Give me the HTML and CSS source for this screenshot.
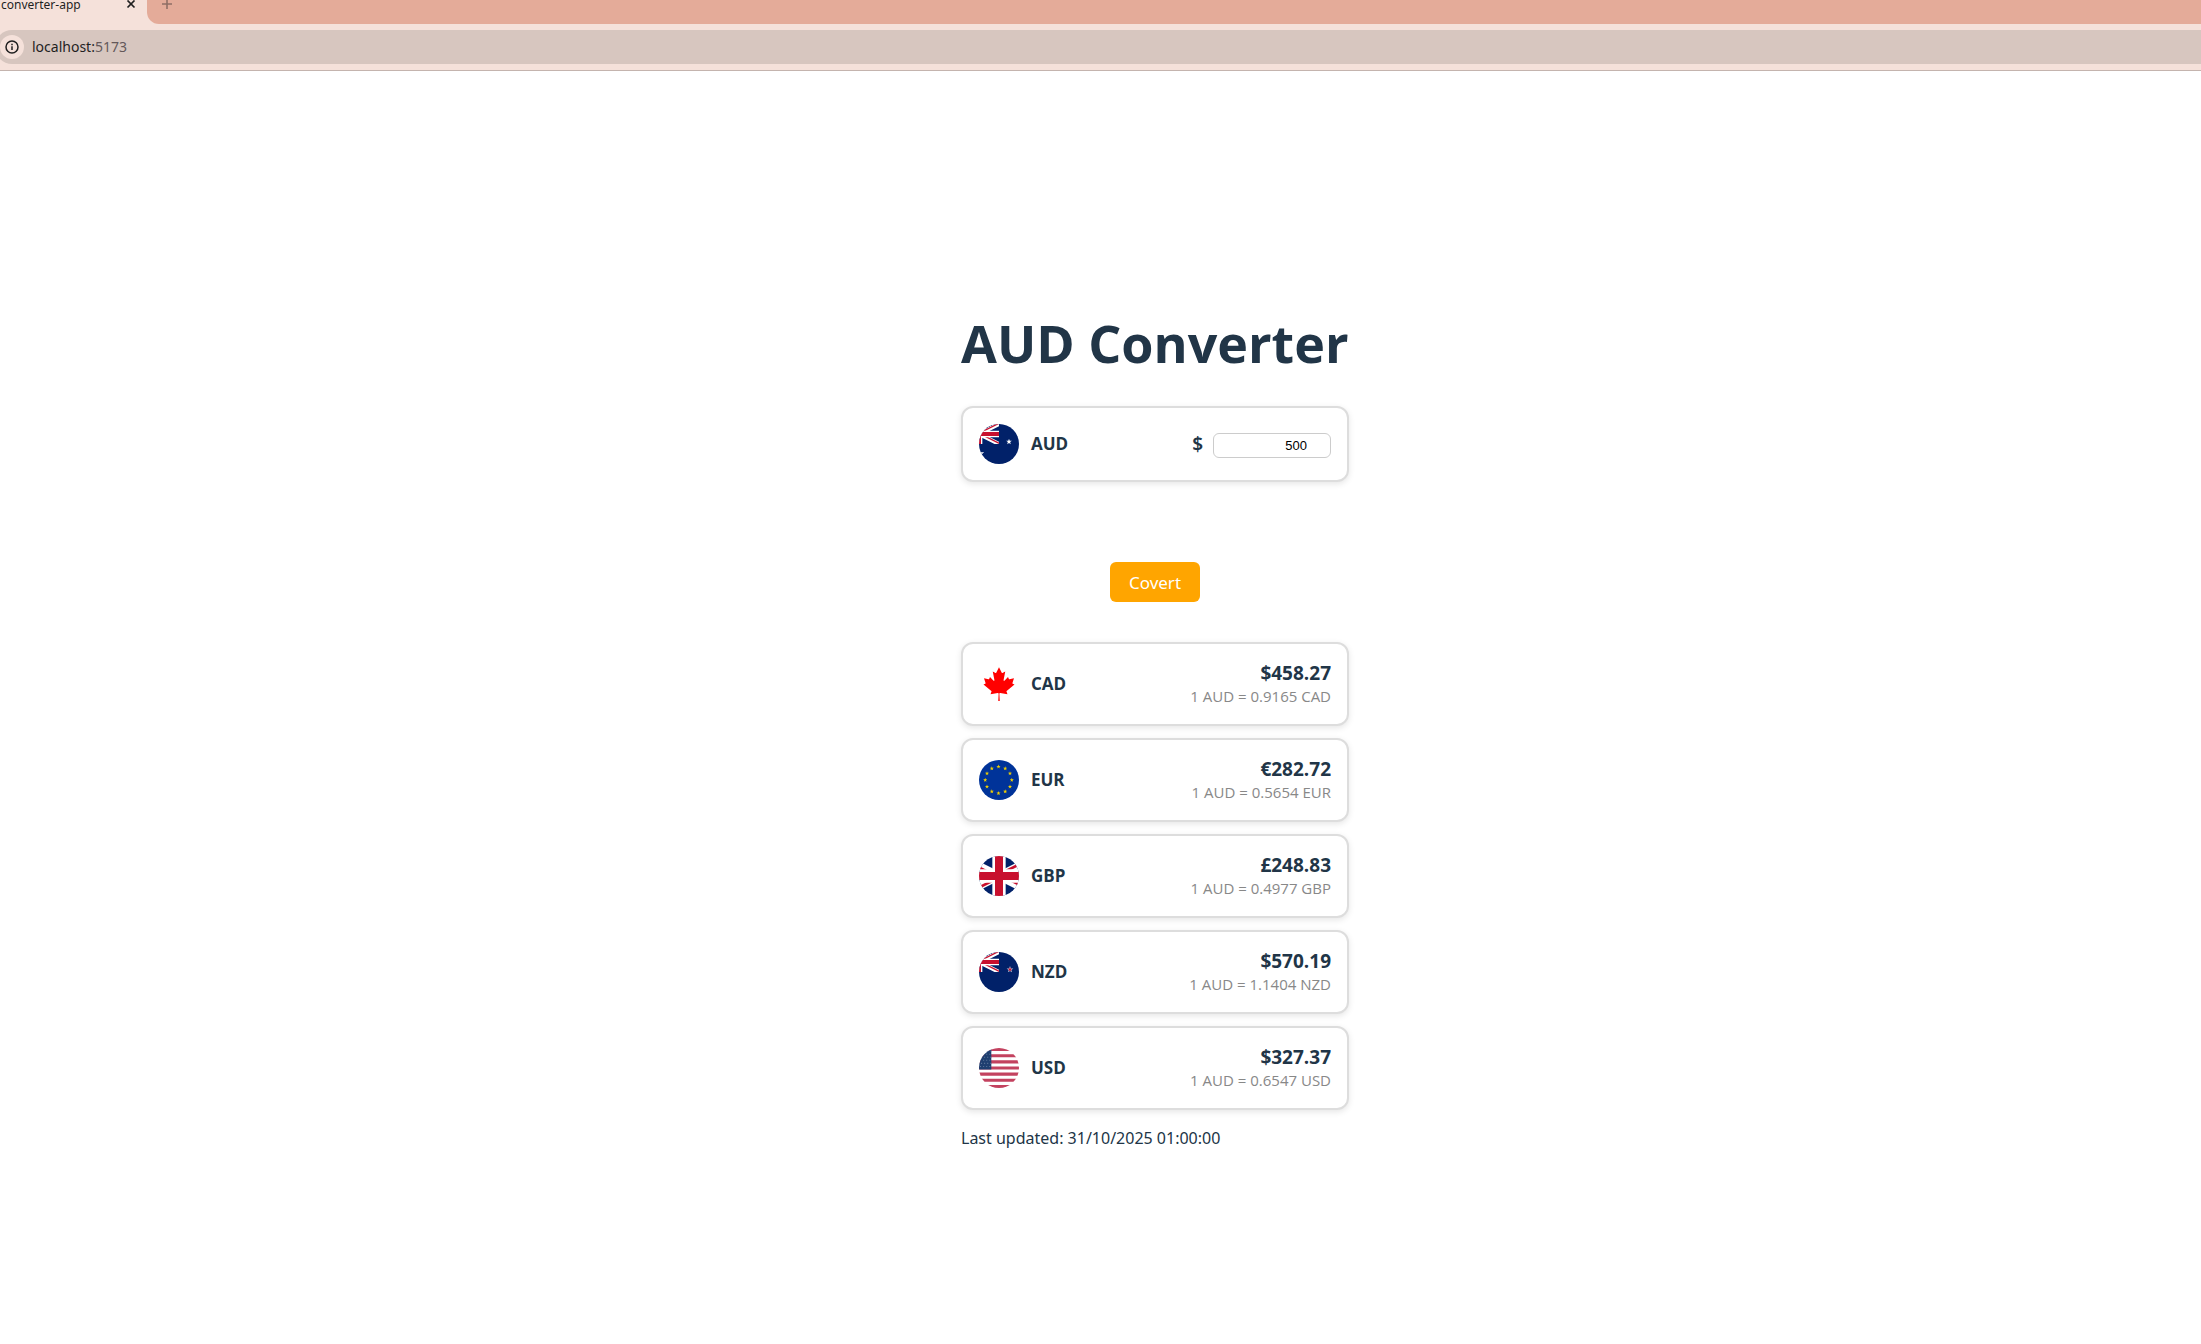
FILE: index.html
```html
<!DOCTYPE html>
<html lang="en">
<head>
<meta charset="utf-8">
<title>converter-app</title>
<link rel="stylesheet" href="styles.css">
</head>
<body>
<svg class="defs" aria-hidden="true">
  <defs>
    <symbol id="union" viewBox="0 0 60 30">
      <clipPath id="saltire"><path d="M30 15h30v15zv15H0zH0V0zV0h30z"/></clipPath>
      <path d="M0 0h60v30H0z" fill="#012169"/>
      <path d="M0 0l60 30M60 0L0 30" stroke="#fff" stroke-width="6"/>
      <path d="M0 0l60 30M60 0L0 30" stroke="#c8102e" stroke-width="4" clip-path="url(#saltire)"/>
      <path d="M30 0v30M0 15h60" stroke="#fff" stroke-width="10"/>
      <path d="M30 0v30M0 15h60" stroke="#c8102e" stroke-width="6"/>
    </symbol>
    <path id="star" d="M0-1L.24-.32.95-.31.38.12.59.81 0 .4-.59.81-.38.12-.95-.31-.24-.32z"/>
  </defs>
</svg>

<header class="browser">
  <div class="tab-strip">
    <div class="tab">
      <span class="tab-title">converter-app</span>
      <button class="tab-close" aria-label="Close tab"><svg viewBox="0 0 10 10"><path d="M1.5 1.5l7 7M8.500 1.500l-7 7" stroke="#1f1f1f" stroke-width="1.700"/></svg></button>
    </div>
    <div class="strip-rest">
      <button class="tab-new" aria-label="New tab"><svg viewBox="0 0 12 12"><path d="M6 1v10M1 6h10" stroke="#8f6f65" stroke-width="1.600"/></svg></button>
    </div>
  </div>
  <div class="toolbar">
    <div class="address">
      <button class="site-info" aria-label="Site information"><svg viewBox="0 0 14 14" fill="none" stroke="#1f1f1f"><circle cx="7" cy="7" r="6" stroke-width="1.500"/><path d="M7 6.300V10M7 3.800v1.400" stroke-width="1.500"/></svg></button>
      <span class="url">localhost:<span class="port">5173</span></span>
    </div>
  </div>
</header>

<main class="page">
  <div class="converter">
    <h1 class="title">AUD Converter</h1>

    <form class="form">
      <div class="card card-source">
        <svg class="flag" viewBox="0 0 40 40">
          <path d="M0 0h40v40H0z" fill="#012169"/>
          <use href="#union" x="-20" y="0" width="40" height="20"/>
          <use href="#star" transform="translate(0 30) scale(5.500)" fill="#fff"/>
          <use href="#star" transform="translate(30 17.700) scale(3)" fill="#fff"/>
        </svg>
        <label class="code" for="amount">AUD</label>
        <div class="amount-entry">
          <span class="symbol">$</span>
          <input class="amount-input" id="amount" type="number" value="500">
        </div>
      </div>
      <button class="convert" type="button">Covert</button>
    </form>

    <ul class="results">
      <li class="card">
        <svg class="flag" viewBox="2400 0 4800 4800">
          <path d="M2400 0h4800v4800H2400z" fill="#fff"/>
          <path fill="#f00" d="m4890 4430-45-863a95 95 0 0 1 111-98l859 151-116-320a65 65 0 0 1 20-73l941-762-212-99a65 65 0 0 1-34-79l186-572-542 115a65 65 0 0 1-73-38l-105-247-423 454a65 65 0 0 1-111-57l204-1052-327 189a65 65 0 0 1-91-27l-332-652-332 652a65 65 0 0 1-91 27l-327-189 204 1052a65 65 0 0 1-111 57l-423-454-105 247a65 65 0 0 1-73 38l-542-115 186 572a65 65 0 0 1-34 79l-212 99 941 762a65 65 0 0 1 20 73l-116 320 859-151a95 95 0 0 1 111 98l-45 863z"/>
        </svg>
        <span class="code">CAD</span>
        <div class="value"><strong class="total">$458.27</strong><span class="rate">1 AUD = 0.9165 CAD</span></div>
      </li>
      <li class="card">
        <svg class="flag" viewBox="0 0 40 40">
          <path d="M0 0h40v40H0z" fill="#039"/>
          <g fill="#f0d000">
            <use href="#star" transform="translate(19.500 6.700) scale(2.200)"/>
            <use href="#star" transform="translate(26.200 8.500) scale(2.200)"/>
            <use href="#star" transform="translate(31 13.400) scale(2.200)"/>
            <use href="#star" transform="translate(32.800 20) scale(2.200)"/>
            <use href="#star" transform="translate(31 26.700) scale(2.200)"/>
            <use href="#star" transform="translate(26.200 31.500) scale(2.200)"/>
            <use href="#star" transform="translate(19.500 33.300) scale(2.200)"/>
            <use href="#star" transform="translate(12.800 31.500) scale(2.200)"/>
            <use href="#star" transform="translate(8 26.700) scale(2.200)"/>
            <use href="#star" transform="translate(6.200 20) scale(2.200)"/>
            <use href="#star" transform="translate(8 13.400) scale(2.200)"/>
            <use href="#star" transform="translate(12.800 8.500) scale(2.200)"/>
          </g>
        </svg>
        <span class="code">EUR</span>
        <div class="value"><strong class="total">€282.72</strong><span class="rate">1 AUD = 0.5654 EUR</span></div>
      </li>
      <li class="card">
        <svg class="flag" viewBox="0 0 40 40"><use href="#union" x="-20" y="0" width="80" height="40"/></svg>
        <span class="code">GBP</span>
        <div class="value"><strong class="total">£248.83</strong><span class="rate">1 AUD = 0.4977 GBP</span></div>
      </li>
      <li class="card">
        <svg class="flag" viewBox="0 0 40 40">
          <path d="M0 0h40v40H0z" fill="#012169"/>
          <use href="#union" x="-20" y="0" width="40" height="20"/>
          <use href="#star" transform="translate(31 17.500) scale(3.500)" fill="#fff" opacity=".8"/>
          <use href="#star" transform="translate(31 17.500) scale(2.300)" fill="#c8102e"/>
        </svg>
        <span class="code">NZD</span>
        <div class="value"><strong class="total">$570.19</strong><span class="rate">1 AUD = 1.1404 NZD</span></div>
      </li>
      <li class="card">
        <svg class="flag" viewBox="0 0 39 39">
          <path d="M0 0h39v39H0z" fill="#fff"/>
          <path d="M0 1.500h39M0 7.500h39M0 13.500h39M0 19.500h39M0 25.500h39M0 31.500h39M0 37.500h39" stroke="#c3425f" stroke-width="3"/>
          <path d="M0 0h12v21H0z" fill="#1f3f70"/>
          <path d="M2 3h10M1 6h10M2 9h10M1 12h10M2 15h10M1 18h10" stroke="#5f779b" stroke-width="1" stroke-dasharray="1 2"/>
        </svg>
        <span class="code">USD</span>
        <div class="value"><strong class="total">$327.37</strong><span class="rate">1 AUD = 0.6547 USD</span></div>
      </li>
    </ul>

    <p class="updated">Last updated: 31/10/2025 01:00:00</p>
  </div>
</main>
</body>
</html>
```
FILE: styles.css
```css
* { box-sizing: border-box; }

body {
  margin: 0;
  background: #fff;
  color: #213547;
  font-family: "Noto Sans", "Open Sans", sans-serif;
  font-size: 16px;
  line-height: 24px;
}

button { border: 0; padding: 0; background: none; font-family: inherit; }

.defs { position: absolute; width: 0; height: 0; }

/* Browser frame */
.browser { background: #f5e1da; border-bottom: 1px solid #c4b4ae; overflow: hidden; }
.tab-strip { display: flex; height: 24px; color: #1f1f1f; }
.tab { display: flex; align-items: flex-start; justify-content: space-between; width: 147px; padding: 0 11px 0 1px; }
.tab-title { font-size: 12px; line-height: 16px; margin-top: -3px; }
.tab-close { width: 10px; height: 10px; margin-top: -1px; }
.tab-close svg, .tab-new svg, .site-info svg { display: block; width: 100%; }
.strip-rest { flex: 1; padding-left: 14px; background: #e4ab99; border-bottom-left-radius: 12px; }
.tab-new { display: block; width: 12px; height: 12px; margin-top: -2px; }
.toolbar { padding: 6px 0; }
.address {
  display: flex;
  align-items: center;
  gap: 8px;
  height: 34px;
  margin-left: -5px;
  padding-left: 5px;
  background: #d7c6bf;
  border-radius: 17px 0 0 17px;
}
.site-info { width: 24px; height: 24px; padding: 5px; border-radius: 12px; background: #f5e1da; }
.url { font-size: 14px; line-height: 20px; color: #1f1f1f; }
.port { color: #64585a; }

/* Page */
.page { display: flex; justify-content: center; padding: 230px 0 180px 109px; }
.converter { width: 388px; }
.title { margin: 0; font-family: "Open Sans", sans-serif; font-size: 52px; line-height: 84px; font-weight: 700; white-space: nowrap; }
.form { display: flex; flex-direction: column; align-items: center; gap: 80px; margin-top: 21px; }

.card {
  display: flex;
  align-items: center;
  gap: 12px;
  width: 100%;
  height: 84px;
  padding: 0 16px;
  background: #fff;
  border: 2px solid #ddd;
  border-radius: 12px;
  box-shadow: 0 2px 6px rgba(0, 0, 0, .1);
}
.card-source { height: 76px; }
.flag { width: 40px; height: 40px; border-radius: 50%; flex: none; }
.code { font-family: "Open Sans", sans-serif; font-size: 17px; font-weight: 700; }

.amount-entry { display: flex; align-items: center; gap: 10px; margin-left: auto; }
.symbol { font-size: 19px; font-weight: 600; }
.amount-input {
  width: 118px;
  height: 25px;
  margin-top: 2px;
  padding: 0 8px;
  border: 1px solid #ccc;
  border-radius: 6px;
  background: #fff;
  color: #000;
  font: 13px "Liberation Sans", Arial, sans-serif;
  text-align: right;
}

.convert {
  width: 90px;
  height: 40px;
  border-radius: 6px;
  background: orange;
  color: #fff;
  font-size: 17px;
}

.results { display: flex; flex-direction: column; gap: 12px; margin: 40px 0 0; padding: 0; list-style: none; }
.value { display: flex; flex-direction: column; align-items: flex-end; margin-left: auto; }
.total { font-family: "Open Sans", sans-serif; font-size: 19px; font-weight: 700; line-height: 24px; }
.rate { font-family: "Open Sans", sans-serif; font-size: 15px; line-height: 22px; color: #888; }
.updated { margin: 16px 0 0; font-size: 16px; }
```
